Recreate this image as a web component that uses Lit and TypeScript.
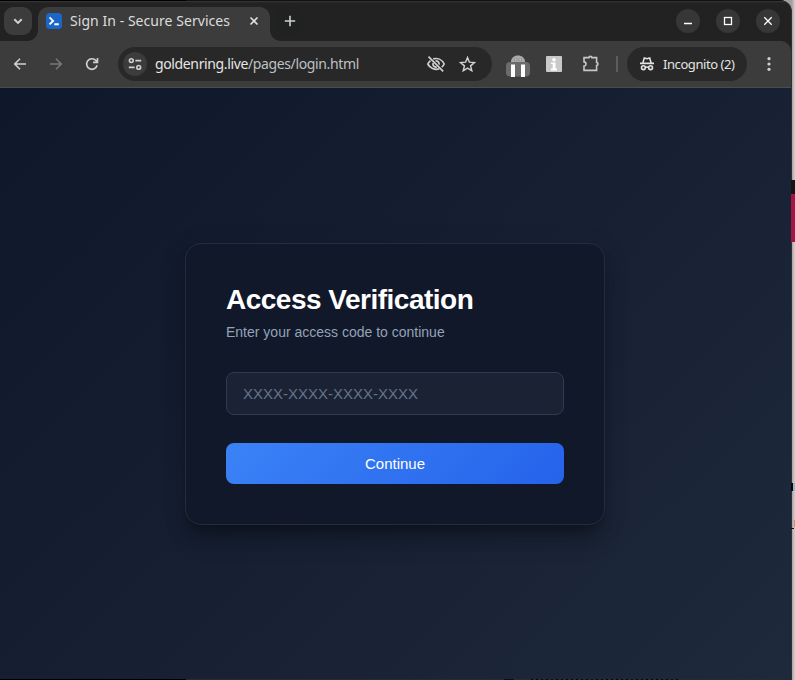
import { LitElement, html, css, svg } from 'lit';
import { customElement, property } from 'lit/decorators.js';

const icons: Record<string, unknown> = {
  back: svg`<path d="M14 8H2.600M8 2.700 2.700 8 8 13.300" />`,
  forward: svg`<path d="M2 8h11.400M8 2.700 13.300 8 8 13.300" />`,
  reload: svg`<path d="M13.1 9.3A5.3 5.3 0 1 1 12 4.6l1.2 1.5M13.5 2v4.4H9" />`,
  chevron: svg`<path d="m4.3 6.2 3.7 3.7 3.7-3.7" stroke-width="2" />`,
  tune: svg`<circle cx="4.3" cy="4.6" r="1.9" /><path d="M8.4 4.6h5.8M1.8 11.4h5.8" /><circle cx="11.7" cy="11.4" r="1.9" />`,
  close: svg`<path d="m4.5 4.5 7 7m0-7-7 7" />`,
  plus: svg`<path d="M8 2.8v10.4M2.8 8h10.4" />`,
  star: svg`<path d="m8 1.5 1.8 4.3 4.7.4-3.6 3.1 1.1 4.6L8 11.4l-4 2.5 1.1-4.6-3.6-3.1 4.7-.4z" stroke-width="1.4" />`,
};

@customElement('app-root')
export class AppRoot extends LitElement {
  @property() address = '/pages/login.html';

  static styles = css`
    :host {
      display: block;
      position: relative;
      width: 795px;
      height: 680px;
      overflow: hidden;
      background: linear-gradient(90deg, #a39f9f 792px, #cbc7c8 794px);
    }
    * {
      box-sizing: border-box;
    }
    .window {
      display: flex;
      flex-direction: column;
      width: 792px;
      height: 679px;
      border-radius: 0 12px 0 0;
      border-right: 1px solid #302f33;
      overflow: hidden;
      background: #222;
      font-family: "Noto Sans", sans-serif;
    }
    .tabs {
      display: flex;
      align-items: flex-start;
      height: 41px;
      flex: none;
      padding: 7px 11px 0 4px;
      background: linear-gradient(#111 1px, #383838 1px, #2c2c2c 2px, #222 3px);
    }
    .icon {
      display: block;
      width: 16px;
      height: 16px;
      flex: none;
      fill: none;
      stroke: #d0d0d0;
      stroke-width: 1.6;
    }
    .search {
      display: flex;
      align-items: center;
      justify-content: center;
      width: 28px;
      height: 28px;
      border-radius: 9px;
      background: #3c3c3c;
    }
    .tab {
      position: relative;
      display: flex;
      align-items: center;
      width: 232px;
      height: 34px;
      margin-left: 6px;
      padding: 0 8px 6px;
      border-radius: 10px 10px 0 0;
      background: #3c3c3c;
    }
    .tab::before,
    .tab::after {
      content: '';
      position: absolute;
      bottom: 0;
      width: 10px;
      height: 10px;
    }
    .tab::before {
      left: -10px;
      background: radial-gradient(circle at 0 0, transparent 9.5px, #3c3c3c 10px);
    }
    .tab::after {
      right: -10px;
      background: radial-gradient(circle at 100% 0, transparent 9.5px, #3c3c3c 10px);
    }
    .favicon {
      display: block;
      width: 16px;
      height: 16px;
      flex: none;
    }
    .title {
      width: 168px;
      margin-left: 8px;
      flex: none;
      color: #dcdcdc;
      font-size: 14px;
      line-height: 20px;
      letter-spacing: 0.05px;
      white-space: nowrap;
    }
    .tab .icon {
      margin-left: 8px;
      stroke: #e0e0e0;
    }
    .add {
      display: flex;
      align-items: center;
      justify-content: center;
      width: 28px;
      height: 28px;
      margin-left: 6px;
      border-radius: 50%;
      background: #202221;
    }
    .controls {
      display: flex;
      gap: 16px;
      margin: 2px 0 0 auto;
    }
    .control {
      display: block;
      width: 24px;
      height: 24px;
      border-radius: 50%;
      background: #373737;
      fill: none;
      stroke: #fff;
      stroke-width: 1.3;
    }
    .toolbar {
      display: flex;
      align-items: center;
      height: 47px;
      flex: none;
      padding: 0 14px 0 12px;
      border-bottom: 1px solid #4a4d4c;
      border-radius: 0 10px 0 0;
      background: #3c3c3c;
    }
    .nav {
      display: flex;
      gap: 20px;
    }
    .nav .dim {
      stroke: #777;
    }
    .omnibox {
      display: flex;
      align-items: center;
      width: 374px;
      height: 34px;
      margin-left: 18px;
      padding: 0 16px 0 5px;
      border-radius: 17px;
      background: #282828;
    }
    .site {
      display: flex;
      align-items: center;
      justify-content: center;
      width: 24px;
      height: 24px;
      border-radius: 50%;
      background: #3c3c3c;
    }
    .url {
      flex: 1;
      margin-left: 8px;
      color: #bdc1c6;
      font-size: 14px;
      line-height: 20px;
      letter-spacing: -0.37px;
      white-space: nowrap;
    }
    .host {
      color: #e6e6e6;
    }
    .omnibox .eye {
      width: 20px;
      height: 20px;
      margin-right: 13px;
      stroke-width: 1.7;
    }
    .omnibox .star {
      width: 17px;
      height: 17px;
    }
    .reader {
      display: block;
      width: 24px;
      height: 24px;
      margin: 2px 0 0 14px;
    }
    .info {
      display: block;
      width: 16px;
      height: 16px;
      margin-left: 16px;
    }
    .puzzle {
      display: block;
      width: 20px;
      height: 20px;
      margin-left: 19px;
      fill: none;
      stroke: #c7c7c7;
      stroke-width: 1.6;
    }
    .divider {
      width: 2px;
      height: 16px;
      margin-left: 15px;
      background: #5c5c5c;
    }
    .incognito {
      display: flex;
      align-items: center;
      width: 120px;
      height: 34px;
      margin-left: 9px;
      padding-left: 12px;
      border-radius: 17px;
      background: #282828;
      color: #e3e3e3;
      font-size: 13px;
      line-height: 20px;
      letter-spacing: -0.43px;
      white-space: nowrap;
    }
    .incognito .icon {
      margin-right: 8px;
      stroke: #e3e3e3;
    }
    .incognito .hat {
      fill: none;
    }
    .menu {
      margin-left: auto;
      fill: #d0d0d0;
      stroke: none;
    }
    .page {
      display: flex;
      align-items: center;
      justify-content: center;
      flex: 1;
      padding-right: 1px;
      background: linear-gradient(135deg, #0f172a 0%, #1e293b 100%);
      font-family: "Liberation Sans", Arial, sans-serif;
    }
    .card {
      width: 420px;
      height: 282px;
      padding: 40px;
      border: 1px solid #232d3f;
      border-radius: 16px;
      background: #101829;
      box-shadow: 0 20px 25px -5px rgba(0, 0, 0, 0.2), 0 8px 14px -5px rgba(0, 0, 0, 0.35),
        0 4px 30px rgba(0, 0, 0, 0.08);
    }
    h1 {
      margin: 0;
      color: #fff;
      font-size: 28px;
      font-weight: 700;
      line-height: 32px;
      letter-spacing: -0.5px;
    }
    p {
      margin: 8px 0 0;
      color: #94a3b8;
      font-size: 14px;
      line-height: 16px;
    }
    input {
      display: block;
      width: 100%;
      height: 43px;
      margin: 32px 0 28px;
      padding: 0 16px;
      border: 1px solid #2f3b4d;
      border-radius: 8px;
      outline: none;
      background: #1a2233;
      color: #fff;
      font: 15px "Liberation Sans", Arial, sans-serif;
    }
    input::placeholder {
      color: #64748b;
    }
    button {
      display: block;
      width: 100%;
      height: 41px;
      padding: 0;
      border: none;
      border-radius: 8px;
      background: linear-gradient(135deg, #3b82f6, #2563eb);
      color: #fff;
      font: 15px "Liberation Sans", Arial, sans-serif;
    }
    /* slivers of the windows lying behind the browser */
    .behind {
      position: absolute;
    }
    .edge {
      left: 791px;
      top: 180px;
      width: 4px;
      height: 62px;
      background: linear-gradient(#161414 14px, #a31545 14px);
    }
    .mark {
      left: 791px;
      top: 483px;
      width: 4px;
      height: 8px;
      background: linear-gradient(90deg, #08080c 2px, #8ab6d2 2px);
    }
    .mark.low {
      top: 520px;
      height: 9px;
      background: linear-gradient(90deg, transparent 3px, #c99355 3px) no-repeat 0 0 / 4px 7px,
        linear-gradient(#111, #111) no-repeat 0 8px / 3px 1px;
    }
    .top {
      left: 0;
      top: 0;
      width: 186px;
      height: 1px;
      background: #000;
    }
    .bottom {
      left: 0;
      top: 679px;
      width: 792px;
      height: 1px;
      background: linear-gradient(90deg, #000 186px, #292930 186px, #292930 504px, #100b14 504px, #100b14 514px, #292930 514px);
    }
    .letters {
      left: 531px;
      top: 679px;
      width: 150px;
      height: 1px;
      background: repeating-linear-gradient(90deg, #08080c 0 2px, #292930 2px 5px);
    }
  `;

  icon(name: string, cls = '') {
    return html`<svg class="icon ${cls}" viewBox="0 0 16 16">${icons[name]}</svg>`;
  }

  renderTabs() {
    return html`
      <div class="tabs">
        <div class="search">${this.icon('chevron')}</div>
        <div class="tab">
          <svg class="favicon" viewBox="0 0 16 16">
            <rect width="16" height="16" rx="3.5" fill="#1b66c9" />
            <path d="m3.5 4.4 3.6 3.5-3.6 3.5M8.3 11.2h4.5" fill="none" stroke="#fff" stroke-width="1.9" />
          </svg>
          <div class="title">Sign In - Secure Services</div>
          ${this.icon('close')}
        </div>
        <div class="add">${this.icon('plus')}</div>
        <div class="controls">
          <svg class="control" viewBox="0 0 24 24"><path d="M8 14.5h8" /></svg>
          <svg class="control" viewBox="0 0 24 24"><rect x="8.5" y="8.5" width="7" height="7" /></svg>
          <svg class="control" viewBox="0 0 24 24"><path d="m8.3 8.3 7.4 7.4m0-7.4-7.4 7.4" /></svg>
        </div>
      </div>
    `;
  }

  renderToolbar() {
    return html`
      <div class="toolbar">
        <div class="nav">
          ${this.icon('back')} ${this.icon('forward', 'dim')} ${this.icon('reload')}
        </div>
        <div class="omnibox">
          <div class="site">${this.icon('tune')}</div>
          <div class="url"><span class="host">goldenring.live</span>${this.address}</div>
          <svg class="icon eye" viewBox="0 0 20 20">
            <path d="M7.200 4.900c4.700-1.200 9 .9 11 5.100-.6 1.300-1.400 2.300-2.400 3.200M13.200 14.900C8.600 16.300 3.900 14.200 1.800 10c.6-1.300 1.500-2.400 2.700-3.300M9.500 7c2.300-.3 3.900 1.400 3.600 3.600M7.100 9c-.8 2.300 1.200 4.500 3.700 4.100M2.500 2.700l14.700 14.600" />
          </svg>
          ${this.icon('star', 'star')}
        </div>
        <svg class="reader" viewBox="0 0 24 24">
          <path d="M5 9c0-4 3-6.500 7-6.500S19 5 19 9z" fill="#aaa" />
          <path d="M8.500 6h2.600v1.800H8.500zM12.900 6h2.600v1.800h-2.600z" fill="#ddd" stroke="#777" stroke-width=".6" />
          <rect y="9" width="24" height="14.500" rx="4" fill="#6b6b6b" />
          <path d="M5 11.500h4V24H5zM15 11.500h4V24h-4z" fill="#fff" />
        </svg>
        <svg class="info" viewBox="0 0 16 16">
          <rect width="16" height="16" rx="1" fill="#c9c9c9" />
          <circle cx="8" cy="3.700" r="1.800" fill="#fff" />
          <path d="M5 6.500h4.500v6H11V14.500H5v-2h1.700V8H5z" fill="#fff" />
        </svg>
        <svg class="puzzle" viewBox="0 0 20 20">
          <path d="M3 3.600h4.900c.1-1.700 2.900-1.700 3 0h4.700v4.800c1.800.1 1.800 3 0 3.100v4.900H3v-4.300c2.700-.4 2.700-3.800 0-4.200z" />
        </svg>
        <div class="divider"></div>
        <div class="incognito">
          <svg class="icon" viewBox="0 0 16 16">
            <path d="M1 7.400h14M3.900 6.900l1.400-4.900 2.700.7 2.700-.7 1.400 4.900M6.400 11.500q1.600-1 3.200 0" />
            <circle cx="4.400" cy="11.700" r="1.900" />
            <circle cx="11.600" cy="11.700" r="1.900" />
          </svg>
          Incognito (2)
        </div>
        <svg class="icon menu" viewBox="0 0 16 16">
          <circle cx="8" cy="2.700" r="1.600" /><circle cx="8" cy="8" r="1.600" /><circle cx="8" cy="13.300" r="1.600" />
        </svg>
      </div>
    `;
  }

  render() {
    return html`
      <div class="window">
        ${this.renderTabs()} ${this.renderToolbar()}
        <div class="page">
          <form class="card" @submit="${this.handleSubmit}">
            <h1>Access Verification</h1>
            <p>Enter your access code to continue</p>
            <input type="text" name="code" placeholder="XXXX-XXXX-XXXX-XXXX">
            <button type="submit">Continue</button>
          </form>
        </div>
      </div>
      <div class="behind edge"></div>
      <div class="behind mark"></div>
      <div class="behind mark low"></div>
      <div class="behind top"></div>
      <div class="behind bottom"></div>
      <div class="behind letters"></div>
    `;
  }

  handleSubmit(event: Event) {
    event.preventDefault();
  }
}
